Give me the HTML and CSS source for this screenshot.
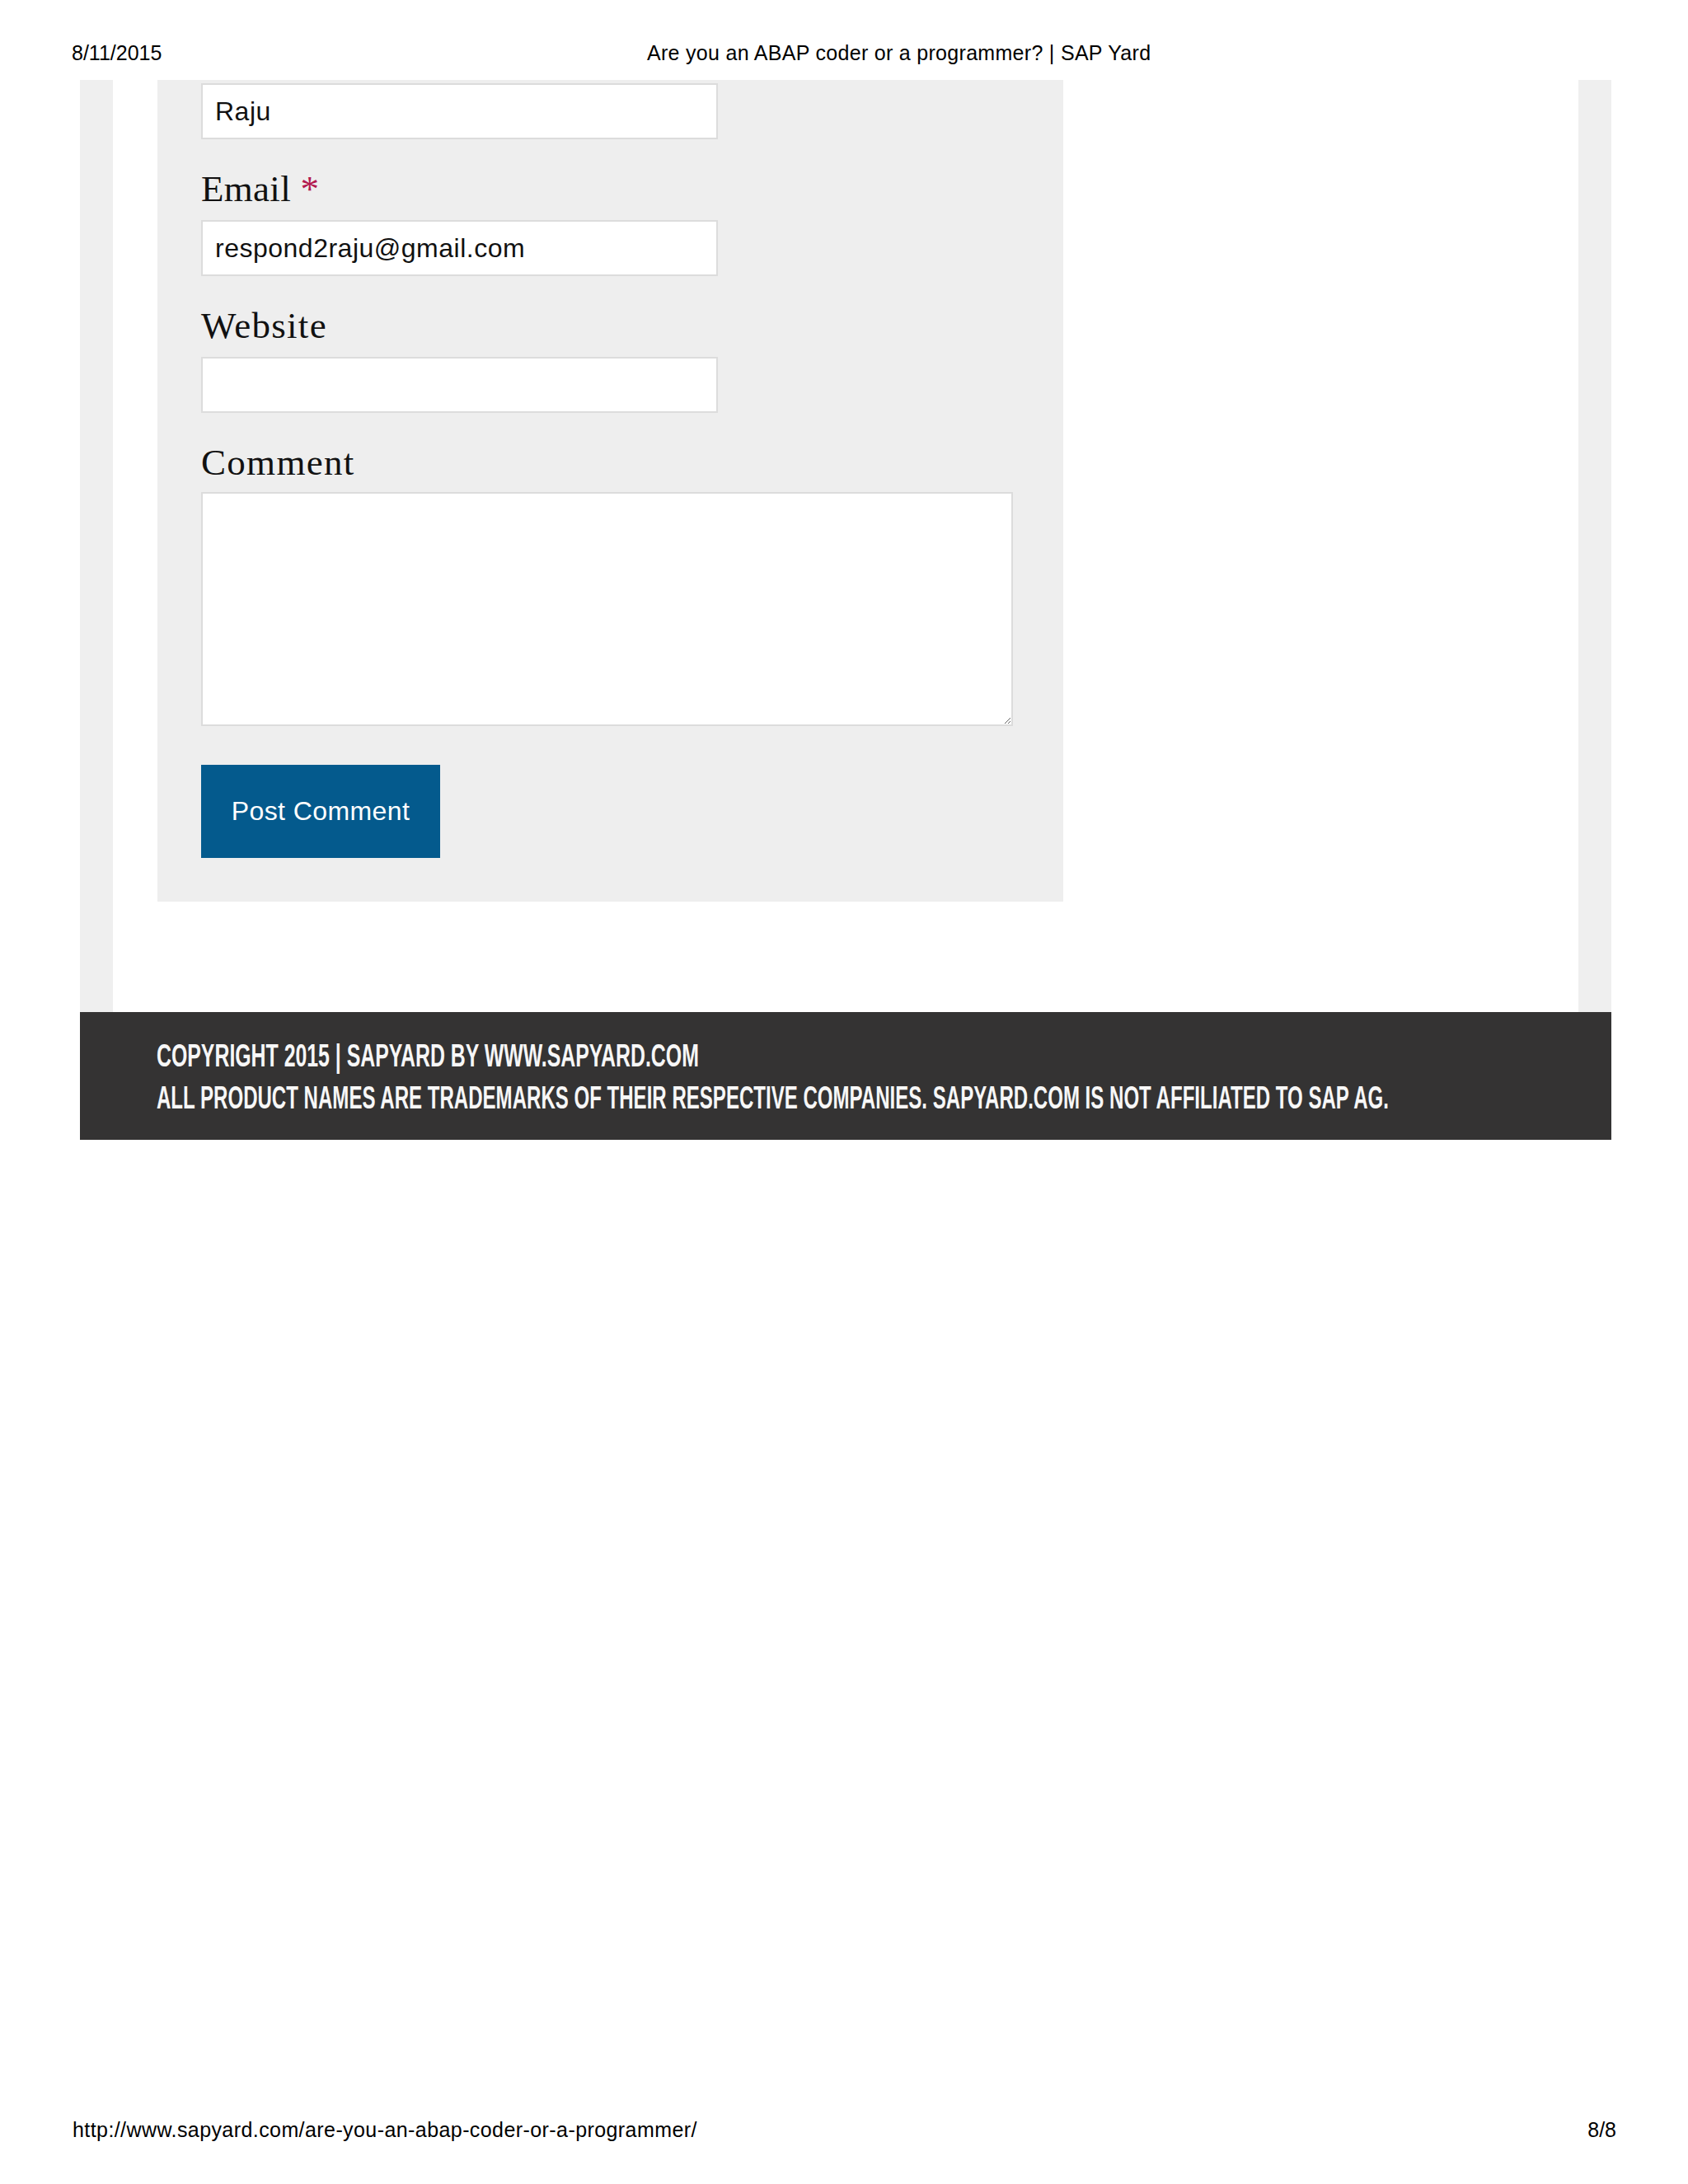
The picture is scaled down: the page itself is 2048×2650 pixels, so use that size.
FILE: index.html
```html
<!DOCTYPE html>
<html lang="en">
<head>
<meta charset="utf-8">
<title>Are you an ABAP coder or a programmer? | SAP Yard</title>
<link rel="stylesheet" href="styles.css">
</head>
<body>
<div class="page">
  <header class="hdr">
    <span class="date">8/11/2015</span>
    <span class="title">Are you an ABAP coder or a programmer? | SAP Yard</span>
  </header>
  <div class="site">
    <div class="content">
      <form class="respond">
        <input class="field" type="text" value="Raju">
        <label class="lbl lbl-e">Email <span class="req">*</span></label>
        <input class="field" type="text" value="respond2raju@gmail.com">
        <label class="lbl">Website</label>
        <input class="field" type="text" value="">
        <label class="lbl lbl-c">Comment</label>
        <textarea class="comment"></textarea>
        <button class="submit" type="button">Post Comment</button>
      </form>
    </div>
    <footer class="site-footer">
      <div class="fline fl1">COPYRIGHT 2015 | SAPYARD BY WWW.SAPYARD.COM</div>
      <div class="fline fl2">ALL PRODUCT NAMES ARE TRADEMARKS OF THEIR RESPECTIVE COMPANIES. SAPYARD.COM IS NOT AFFILIATED TO SAP AG.</div>
    </footer>
  </div>
  <footer class="pfoot">
    <span class="url">http://www.sapyard.com/are-you-an-abap-coder-or-a-programmer/</span>
    <span>8/8</span>
  </footer>
</div>
</body>
</html>
```
FILE: styles.css
```css
html, body {
  margin: 0;
  padding: 0;
  background: #fff;
}

.page {
  width: 2048px;
  height: 2650px;
  display: flex;
  flex-direction: column;
  font-family: "Liberation Sans", Arial, sans-serif;
  color: #000;
  overflow: hidden;
}

.hdr {
  height: 97px;
  box-sizing: border-box;
  padding: 50px 0 0 87px;
  display: flex;
  font-size: 25px;
  line-height: 28px;
  flex: none;
}

.date {
  width: 107px;
}

.title {
  margin-left: 591px;
  letter-spacing: 0.3px;
}

.site {
  margin-left: 97px;
  width: 1858px;
  flex: none;
}

.content {
  height: 1131px;
  box-sizing: border-box;
  border-left: 40px solid #efefef;
  border-right: 40px solid #efefef;
  background: #fff;
  padding-left: 54px;
}

.respond {
  width: 1099px;
  box-sizing: border-box;
  background: #eeeeee;
  padding: 4px 0 53px 53px;
  margin: 0;
  display: flex;
  flex-direction: column;
  align-items: flex-start;
}

.field {
  width: 627px;
  height: 68px;
  box-sizing: border-box;
  border: 2px solid #dcdcdc;
  background: #fff;
  padding: 0 0 0 15px;
  margin: 0 0 38px 0;
  font-family: "Liberation Sans", Arial, sans-serif;
  font-size: 32px;
  letter-spacing: 0.5px;
  color: #111;
  outline: none;
}

.lbl {
  display: block;
  font-family: "Liberation Serif", "Times New Roman", serif;
  font-size: 45px;
  line-height: 45px;
  letter-spacing: 1.3px;
  color: #111;
  margin: 0 0 15px 0;
}

.lbl-e {
  letter-spacing: 0.3px;
}

.lbl-c {
  margin-bottom: 13px;
}

.req {
  color: #b3194f;
}

.comment {
  width: 985px;
  height: 284px;
  box-sizing: border-box;
  border: 2px solid #dcdcdc;
  background: #fff;
  margin: 0 0 47px 0;
  padding: 8px 15px;
  font-family: "Liberation Sans", Arial, sans-serif;
  font-size: 32px;
  outline: none;
}

.submit {
  width: 290px;
  height: 113px;
  border: 0;
  padding: 0;
  background: #045a8d;
  color: #fff;
  font-family: "Liberation Sans", Arial, sans-serif;
  font-size: 32px;
  letter-spacing: 0.4px;
}

.site-footer {
  height: 155px;
  box-sizing: border-box;
  background: #343333;
  padding: 28px 0 0 93px;
  color: #f7f7f7;
  font-family: "Liberation Sans", Arial, sans-serif;
  font-weight: bold;
  font-size: 38px;
  line-height: 51px;
}

.fline {
  white-space: nowrap;
  transform-origin: 0 50%;
}

.fl1 {
  transform: scaleX(0.654);
}

.fl2 {
  transform: scaleX(0.633);
}

.pfoot {
  margin-top: auto;
  display: flex;
  justify-content: space-between;
  padding: 0 87px 52px 88px;
  font-size: 25px;
  line-height: 28px;
}

.url {
  letter-spacing: 0.42px;
}
```
